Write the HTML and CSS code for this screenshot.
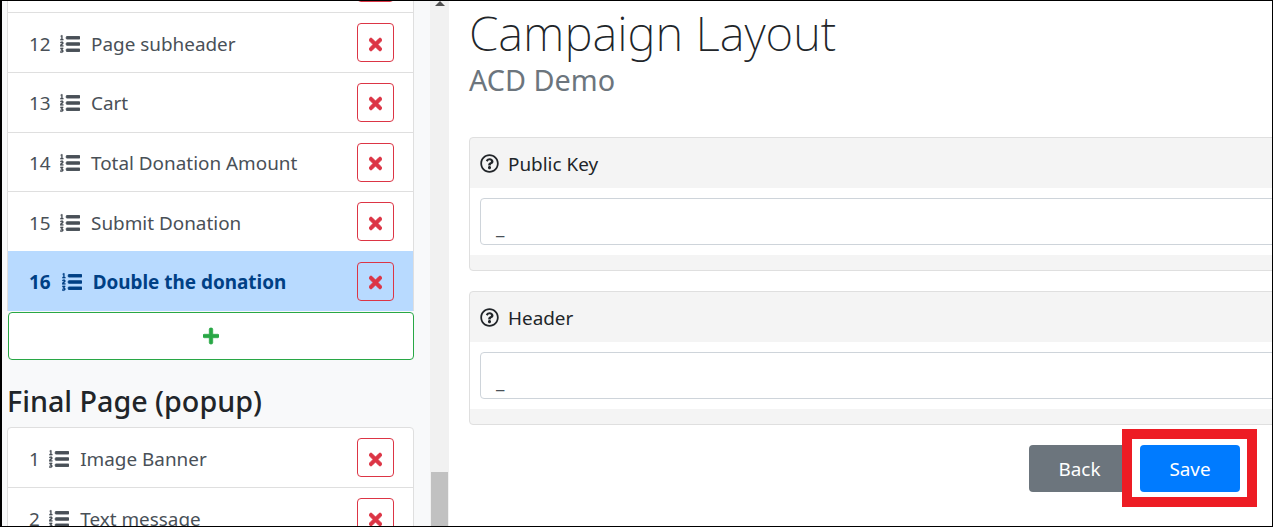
FILE: index.html
```html
<!DOCTYPE html>
<html lang="en">
<head>
<meta charset="utf-8">
<title>Campaign Layout</title>
<link rel="stylesheet" href="styles.css">
</head>
<body>
<svg class="defs" aria-hidden="true">
  <symbol id="list" viewBox="0 0 512 512">
    <path class="ico-digits" d="M61.77 401l17.5-20.15a19.92 19.92 0 0 0 5.07-14.19v-3.31C84.34 356 80.5 352 73 352H16a8 8 0 0 0-8 8v16a8 8 0 0 0 8 8h22.83a157.41 157.41 0 0 0-11 12.31l-5.61 7c-4 5.07-5.25 10.13-2.8 14.88l1.05 1.93c3 5.76 6.29 7.88 12.25 7.88h4.73c10.33 0 15.94 2.44 15.94 9.09 0 4.72-4.2 8.22-14.36 8.22a41.54 41.54 0 0 1-15.47-3.12c-6.49-3.88-11.74-3.5-15.6 3.12l-5.59 9.31c-3.72 6.13-3.19 11.72 2.63 15.94 7.71 4.69 20.38 9.44 37 9.44 34.16 0 48.5-22.75 48.5-44.12-.03-14.38-9.12-29.76-28.73-34.88zM16 160h64a8 8 0 0 0 8-8v-16a8 8 0 0 0-8-8H64V40a8 8 0 0 0-8-8H32a8 8 0 0 0-7.14 4.42l-8 16A8 8 0 0 0 24 64h8v64H16a8 8 0 0 0-8 8v16a8 8 0 0 0 8 8zm-3.91 160H80a8 8 0 0 0 8-8v-16a8 8 0 0 0-8-8H41.32c3.29-10.29 48.34-18.68 48.34-56.44 0-29.06-25-39.56-44.47-39.56-21.36 0-33.8 10-40.46 18.75-4.37 5.59-3 10.84 2.8 15.37l8.58 6.88c5.61 4.56 11 2.47 16.12-2.44a13.44 13.44 0 0 1 9.46-3.84c3.33 0 9.28 1.56 9.28 8.75C51 248.19 0 257.31 0 304.59v4C0 316 5.08 320 12.09 320z"/>
    <path class="ico-lines" d="M496 224H176a16 16 0 0 0-16 16v32a16 16 0 0 0 16 16h320a16 16 0 0 0 16-16v-32a16 16 0 0 0-16-16zm0-160H176a16 16 0 0 0-16 16v32a16 16 0 0 0 16 16h320a16 16 0 0 0 16-16V80a16 16 0 0 0-16-16zm0 320H176a16 16 0 0 0-16 16v32a16 16 0 0 0 16 16h320a16 16 0 0 0 16-16v-32a16 16 0 0 0-16-16z"/>
  </symbol>
  <symbol id="times" viewBox="0 0 352 512"><path d="M242.72 256l100.07-100.07c12.28-12.28 12.28-32.19 0-44.48l-22.24-22.24c-12.28-12.28-32.19-12.28-44.48 0L176 189.28 75.93 89.21c-12.28-12.28-32.19-12.28-44.48 0L9.21 111.45c-12.28 12.28-12.28 32.19 0 44.48L109.28 256 9.21 356.07c-12.28 12.28-12.28 32.19 0 44.48l22.24 22.24c12.28 12.28 32.2 12.28 44.48 0L176 322.72l100.07 100.07c12.28 12.28 32.2 12.28 44.48 0l22.24-22.24c12.28-12.28 12.28-32.19 0-44.48L242.72 256z"/></symbol>
  <symbol id="plus" viewBox="0 0 448 512"><path d="M416 208H272V64c0-17.67-14.33-32-32-32h-32c-17.67 0-32 14.33-32 32v144H32c-17.67 0-32 14.33-32 32v32c0 17.67 14.33 32 32 32h144v144c0 17.67 14.33 32 32 32h32c17.67 0 32-14.33 32-32V304h144c17.67 0 32-14.33 32-32v-32c0-17.67-14.33-32-32-32z"/></symbol>
  <symbol id="help" viewBox="0 0 512 512"><path d="M256 8C119.043 8 8 119.083 8 256c0 136.997 111.043 248 248 248s248-111.003 248-248C504 119.083 392.957 8 256 8zm0 448c-110.532 0-200-89.431-200-200 0-110.495 89.472-200 200-200 110.491 0 200 89.471 200 200 0 110.53-89.431 200-200 200zm107.244-255.2c0 67.052-72.421 68.084-72.421 92.863V300c0 6.627-5.373 12-12 12h-45.647c-6.627 0-12-5.373-12-12v-8.659c0-35.745 27.1-50.034 47.579-61.516 17.561-9.845 28.324-16.541 28.324-29.579 0-17.246-21.999-28.693-39.784-28.693-23.189 0-33.894 10.977-48.942 29.969-4.057 5.12-11.46 6.071-16.666 2.124l-27.824-21.098c-5.107-3.872-6.251-11.066-2.644-16.363C184.846 131.491 214.94 112 261.794 112c49.071 0 101.45 38.304 101.45 88.8zM298 368c0 23.159-18.841 42-42 42s-42-18.841-42-42 18.841-42 42-42 42 18.841 42 42z"/></symbol>
</svg>
<div class="frame">
  <aside class="sidebar">
    <div class="scroller">
      <ul class="list list-first">
        <li class="row row-stub"><button class="del"><svg class="x"><use href="#times"/></svg></button></li>
        <li class="row"><span class="num">12</span><svg class="ico"><use href="#list"/></svg><span class="name">Page subheader</span><button class="del"><svg class="x"><use href="#times"/></svg></button></li>
        <li class="row"><span class="num">13</span><svg class="ico"><use href="#list"/></svg><span class="name">Cart</span><button class="del"><svg class="x"><use href="#times"/></svg></button></li>
        <li class="row"><span class="num">14</span><svg class="ico"><use href="#list"/></svg><span class="name">Total Donation Amount</span><button class="del"><svg class="x"><use href="#times"/></svg></button></li>
        <li class="row"><span class="num">15</span><svg class="ico"><use href="#list"/></svg><span class="name">Submit Donation</span><button class="del"><svg class="x"><use href="#times"/></svg></button></li>
        <li class="row row-active"><span class="num">16</span><svg class="ico"><use href="#list"/></svg><span class="name">Double the donation</span><button class="del"><svg class="x"><use href="#times"/></svg></button></li>
      </ul>
      <button class="add"><svg class="plus"><use href="#plus"/></svg></button>
      <h2 class="group-title">Final Page (popup)</h2>
      <ul class="list">
        <li class="row"><span class="num">1</span><svg class="ico"><use href="#list"/></svg><span class="name">Image Banner</span><button class="del"><svg class="x"><use href="#times"/></svg></button></li>
        <li class="row"><span class="num">2</span><svg class="ico"><use href="#list"/></svg><span class="name">Text message</span><button class="del"><svg class="x"><use href="#times"/></svg></button></li>
      </ul>
    </div>
    <div class="scrollbar">
      <span class="arrow"></span>
      <span class="thumb"></span>
    </div>
  </aside>
  <main class="main">
    <h1 class="title">Campaign Layout</h1>
    <p class="subtitle">ACD Demo</p>
    <section class="card">
      <header class="card-head"><svg class="help"><use href="#help"/></svg><span class="card-label">Public Key</span></header>
      <div class="card-body"><div class="input">_</div></div>
      <div class="card-foot"></div>
    </section>
    <section class="card">
      <header class="card-head"><svg class="help"><use href="#help"/></svg><span class="card-label">Header</span></header>
      <div class="card-body"><div class="input">_</div></div>
      <div class="card-foot"></div>
    </section>
    <div class="actions">
      <button class="btn btn-back">Back</button>
      <button class="btn btn-save">Save</button>
      <span class="callout"></span>
    </div>
  </main>
</div>
</body>
</html>
```
FILE: styles.css
```css
* { box-sizing: border-box; }
html, body { margin: 0; height: 100%; overflow: hidden; }
body { font-family: "Noto Sans", "Open Sans", sans-serif; font-size: 18.9px; color: #212529; background: #fff; }
.defs { width: 0; height: 0; position: absolute; }
.frame { height: 527px; display: flex; border: 1px solid #000; border-left-width: 2px; overflow: hidden; }

.sidebar { width: 447px; flex: none; display: flex; background: #f8f9fa; }
.scroller { width: 428px; flex: none; padding-left: 5px; overflow: hidden; }
.scrollbar { width: 19px; flex: none; background: #f1f1f1; display: flex; flex-direction: column; align-items: center; justify-content: space-between; }
.arrow { width: 0; height: 0; border: 5px solid transparent; border-top: 0; border-bottom: 5px solid #505050; }
.thumb { width: 17px; height: 54px; background: #c1c1c1; }

.list { list-style: none; margin: 0; padding: 0; width: 407px; background: #fff; border: 1px solid #dfdfdf; border-radius: 4px; }
.list-first { margin-top: -49.4px; border-bottom: 0; border-radius: 0; }
.row { height: 59.7px; display: flex; align-items: center; padding: 0 19px 0 21px; border-top: 1px solid #dfdfdf; color: #495057; }
.row:first-child { border-top: 0; }
.row-stub { justify-content: flex-end; }
.num { margin-right: 9.4px; padding-top: 2px; }
.ico { width: 20px; height: 20px; fill: currentColor; flex: none; margin: 2px 11px 0 0; overflow: visible; }
.ico-digits { stroke: currentColor; stroke-width: 5px; }
.ico-lines { stroke: currentColor; stroke-width: 24px; }
.name { flex: 1; white-space: nowrap; padding-top: 2px; }
.del { width: 37px; height: 39px; padding: 0; flex: none; display: flex; align-items: center; justify-content: center; background: transparent; border: 1px solid #dc3545; border-radius: 4px; }
.x { width: 13px; height: 19px; margin-top: 3px; fill: #dc3545; stroke: #dc3545; stroke-width: 24px; overflow: visible; }
.row-active { background: #b8daff; color: #004085; font-weight: 700; border-top-color: #b8daff; }
.row-active .num { margin-right: 11px; }
.add { display: flex; align-items: center; justify-content: center; width: 406px; height: 48px; margin: 1px 0 0 1px; padding: 0; background: #fff; border: 1px solid #28a745; border-radius: 4px; }
.plus { width: 16px; height: 20px; fill: #28a745; stroke: #28a745; stroke-width: 20px; overflow: visible; }
.group-title { margin: 23px 0 8px; font-size: 28.7px; line-height: 36px; font-weight: 500; color: #212529; white-space: nowrap; }

.main { flex: 1; min-width: 0; padding-left: 20px; background: #fff; }
.title { margin: 0; font-size: 47.5px; font-weight: 200; line-height: 64px; color: #212529; white-space: nowrap; }
.subtitle { margin: 0 0 42px; font-size: 28.8px; line-height: 30px; color: #6c757d; }
.card { width: 900px; height: 134px; margin-bottom: 20px; background: #f4f4f4; border: 1px solid #dfdfdf; border-radius: 4px; display: flex; flex-direction: column; }
.card-head { height: 50px; display: flex; align-items: center; padding-left: 10px; gap: 9px; color: #212529; }
.card-label { padding-top: 2px; }
.help { width: 19px; height: 19px; fill: #212529; }
.card-body { height: 67px; padding: 10px; background: #fff; }
.input { height: 47px; padding: 12px 15px 0; background: #fff; border: 1px solid #ced4da; border-radius: 4px; color: #495057; line-height: 32px; }
.card-foot { flex: 1; }

.actions { position: relative; width: 771px; display: flex; justify-content: flex-end; gap: 10px; }
.btn { width: 101px; height: 47px; font: inherit; color: #fff; border: 0; border-radius: 4px; padding: 0; }
.btn-back { background: #6c757d; }
.btn-save { width: 100px; background: #007bff; }
.callout { position: absolute; left: 653px; top: -16px; width: 135px; height: 78px; border: 10px solid #ed1c24; }
```
